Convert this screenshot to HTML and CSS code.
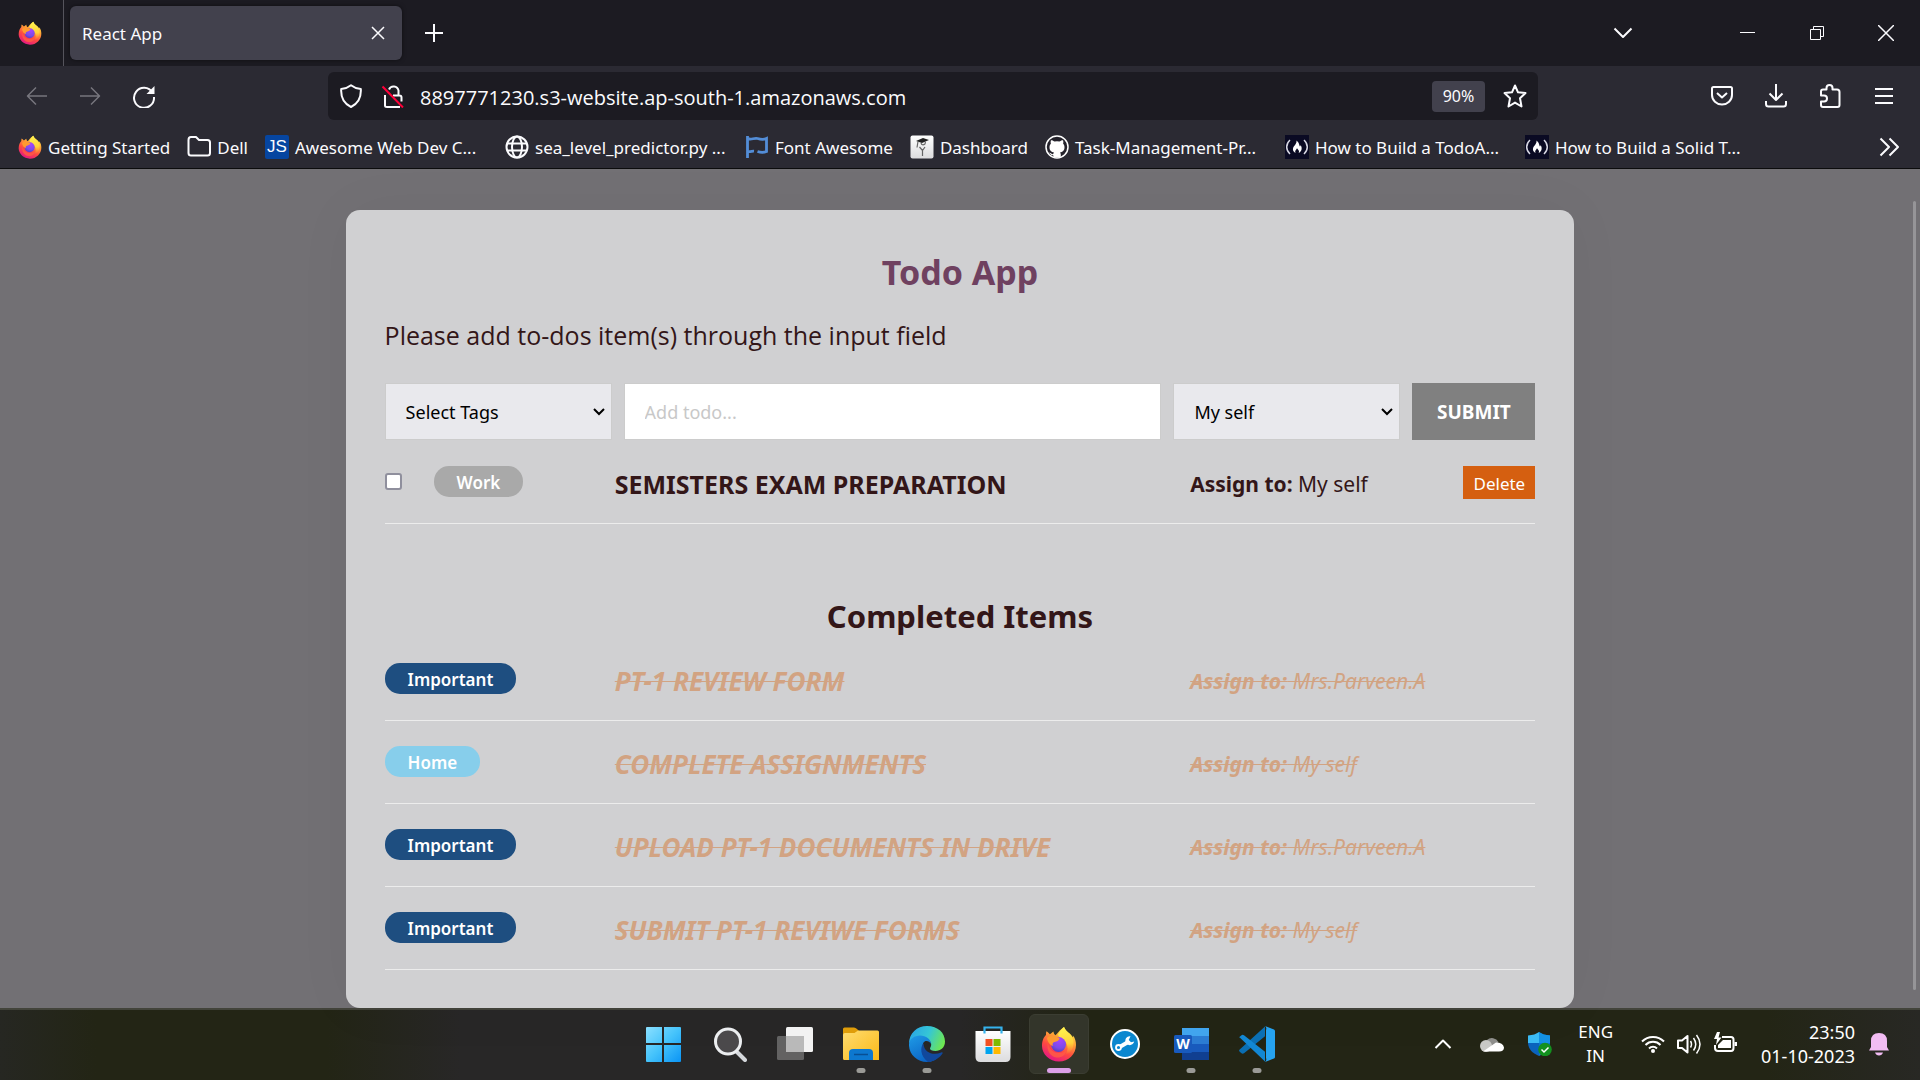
FILE: index.html
```html
<!DOCTYPE html>
<html lang="en">
<head>
<meta charset="utf-8">
<title>React App</title>
<link rel="stylesheet" href="styles.css">
</head>
<body>
<svg class="defs" aria-hidden="true">
  <defs>
    <linearGradient id="fxBody" x1="0.8" y1="0" x2="0.3" y2="1"><stop offset="0" stop-color="#fff44f"/><stop offset="0.35" stop-color="#ffa436"/><stop offset="0.65" stop-color="#ff4a40"/><stop offset="1" stop-color="#e31587"/></linearGradient>
    <linearGradient id="fxFlame" x1="0.5" y1="0" x2="0.6" y2="1"><stop offset="0" stop-color="#fff44f"/><stop offset="0.6" stop-color="#ffd23a"/><stop offset="1" stop-color="#ff9a2e" stop-opacity="0"/></linearGradient>
    <radialGradient id="fxGlobe" cx="0.6" cy="0.2" r="0.9"><stop offset="0" stop-color="#a643ff"/><stop offset="0.6" stop-color="#7a4be8"/><stop offset="1" stop-color="#4a3bb5"/></radialGradient>
    <linearGradient id="winG" x1="0" y1="0" x2="1" y2="1"><stop offset="0" stop-color="#8be0ff"/><stop offset="0.5" stop-color="#45c3fb"/><stop offset="1" stop-color="#0a94f5"/></linearGradient>
    <linearGradient id="folderG" x1="0" y1="0" x2="1" y2="1"><stop offset="0" stop-color="#ffdc70"/><stop offset="1" stop-color="#fbb917"/></linearGradient>
    <linearGradient id="edgeTop" x1="0" y1="0.3" x2="1" y2="0.6"><stop offset="0" stop-color="#2aa6e4"/><stop offset="0.5" stop-color="#35c6d6"/><stop offset="1" stop-color="#6fe84e"/></linearGradient>
    <linearGradient id="edgeLow" x1="0" y1="0" x2="0.6" y2="1"><stop offset="0" stop-color="#1f9be6"/><stop offset="1" stop-color="#0a62c4"/></linearGradient>
    <linearGradient id="paper" x1="0" y1="0" x2="0" y2="1"><stop offset="0" stop-color="#ffffff"/><stop offset="1" stop-color="#dcdcde"/></linearGradient>
    <symbol id="firefox" viewBox="0 0 36 36">
      <path fill="url(#fxBody)" d="M1 20C1 14 3 11 5 9c0-1.500 0-3 .5-3.800 1.500.8 2.500 2 3.300 3 1.800-.8 2.600-2.200 3.700-2.700.2 1.700.7 3 2 3.700 2-1.700 3.800-5 8.500-8.200 1 3 3.500 5 5.500 6.500 1.500 1.200 2.500 2.500 3 4 .3-.8.4-1.300.4-2C34.200 12 35 16 35 19c0 9-7.500 16.500-17 16.500S1 28 1 20z"/>
      <path fill="url(#fxFlame)" d="M17 8.500C18.500 6 20.500 3 23 1c1 3 3.500 5 5.500 6.500 3.500 3 5 8 3.500 13.500-1.500 5-5 7.500-8 8 3-4 3.500-9 .5-13C22 13 18 12 17 8.500z"/>
      <circle cx="17.500" cy="18.500" r="7.500" fill="url(#fxGlobe)"/>
      <path fill="#ff9a30" d="M6 12c2-2.500 5.500-3 9-1.500l3.500 1.500c0 2.500-2.500 3.500-5 4-1.800.5-2.500 2-1.500 4-3-1-5.500-4-6-8z"/>
      <path fill="#ff5a45" opacity=".85" d="M7 16c0 6 4.500 11 11 11 4 0 7-2 8.500-5-1.500 8-7 10-11 9.500C9 30.500 5 24 7 16z"/>
    </symbol>
    <symbol id="fcc" viewBox="0 0 24 24">
      <rect width="24" height="24" fill="#0a0a23"/>
      <path d="M5 5C.6 9 .6 15 5 19M19 5c4.400 4 4.400 10 0 14" fill="none" stroke="#d8d8e4" stroke-width="1.500"/>
      <path fill="#fff" d="M11.500 5.500c3 2.500 2.500 4.500 3.500 6 .5-.5.600-1 .6-1.500 1.600 2.500 1.800 6-1.900 8 1-2-.3-3-1.700-4.700-.9 1.700-2.600 2.900-1.400 4.700-3.200-1.500-3.200-4.500-1.600-6.700 1.500-2 2.800-3.300 2.500-5.800z"/>
    </symbol>
  </defs>
</svg>

<div class="browser">
  <header class="tabs">
    <div class="tabs__pin"><svg class="i24"><use href="#firefox"/></svg></div>
    <div class="tab">
      <span>React App</span>
      <button class="icon-btn" aria-label="Close tab"><svg width="14" height="14" viewBox="0 0 14 14"><path d="M1 1l12 12M13 1L1 13" class="line"/></svg></button>
    </div>
    <button class="icon-btn tabs__new" aria-label="New tab"><svg width="18" height="18" viewBox="0 0 18 18"><path d="M9 0v18M0 9h18" class="line thick"/></svg></button>
    <div class="winctl">
      <button class="icon-btn winctl__list" aria-label="List all tabs"><svg width="20" height="12" viewBox="0 0 20 12"><path d="M1.500 1.500L10 10l8.500-8.500" class="line thick"/></svg></button>
      <button class="icon-btn" aria-label="Minimize"><svg width="16" height="16"><path d="M0 7.500h15" class="line thin"/></svg></button>
      <button class="icon-btn" aria-label="Restore"><svg width="16" height="16"><path d="M1.500 4.500h10v10h-10zM4.500 4.500v-3h10v10h-3" class="line thin"/></svg></button>
      <button class="icon-btn" aria-label="Close"><svg width="16" height="16"><path d="M0 0l16 16M16 0L0 16" class="line"/></svg></button>
    </div>
  </header>

  <nav class="toolbar" aria-label="Navigation">
    <div class="toolbar__nav">
      <button class="icon-btn dim" aria-label="Back"><svg width="22" height="20" viewBox="0 0 22 20"><path d="M21 10H1.500M10 1.500L1.500 10l8.500 8.500" class="line"/></svg></button>
      <button class="icon-btn dim" aria-label="Forward"><svg width="22" height="20" viewBox="0 0 22 20"><path d="M1 10h19.500M12 1.500l8.500 8.500-8.500 8.500" class="line"/></svg></button>
      <button class="icon-btn" aria-label="Reload"><svg class="i24" viewBox="0 0 24 24"><path d="M20.500 8.500A10 10 0 1 0 22 13" class="line thick"/><path d="M22.500 2v8h-8z" fill="currentColor"/></svg></button>
    </div>
    <div class="urlbar">
      <button class="icon-btn" aria-label="Tracking protection"><svg class="i24" viewBox="0 0 24 24"><path d="M12 1.200c3 2.300 6.300 3.600 9.800 3.900C22.300 13.500 19 19.800 12 23 5 19.800 1.700 13.500 2.200 5.100 5.700 4.800 9 3.500 12 1.200z" class="line thick"/></svg></button>
      <button class="icon-btn" aria-label="Connection not secure"><svg class="i24" viewBox="0 0 24 24"><path d="M8 5.500a5 5 0 0 1 9.500 1V11M12 11.500h6.500q2 0 2 2v4M4 11v10.500Q4 23 6 23h13" class="line thick"/><path d="M1.500 2.500l20.500 21" stroke="#ff0039" stroke-width="2"/></svg></button>
      <input class="urlbar__input" type="text" aria-label="Address" value="8897771230.s3-website.ap-south-1.amazonaws.com">
      <button class="zoom-chip">90%</button>
      <button class="icon-btn" aria-label="Bookmark this page"><svg class="i24" viewBox="0 0 24 24"><path d="M12 1.500l3 6.800 7.500.8-5.500 5.200 1.500 8.200L12 18.600l-6.500 3.900L7 14.300 1.500 9.100 9 8.300z" class="line thick"/></svg></button>
    </div>
    <div class="toolbar__tools">
      <button class="icon-btn" aria-label="Save to Pocket"><svg class="i24" viewBox="0 0 24 24"><path d="M3.500 3h17q1.500 0 1.500 1.500V11a10 9.500 0 0 1-20 0V4.500Q2 3 3.500 3z" class="line thick"/><path d="M7 9l5 4.500L17 9" class="line thick"/></svg></button>
      <button class="icon-btn" aria-label="Downloads"><svg class="i24" viewBox="0 0 24 24"><path d="M12 0v15.500M5.500 9.500l6.500 6.500 6.500-6.500M2 17v3q0 2.500 2.500 2.500h15q2.500 0 2.500-2.500v-3" class="line thick"/></svg></button>
      <button class="icon-btn" aria-label="Extensions"><svg class="i24" viewBox="0 0 24 24"><path d="M3 7.500q0-2 2-2h3.500V4a3 3 0 0 1 6 0v1.500H19q2.500 0 2.500 2.500v13q0 2-2 2H5q-2 0-2-2v-3.500h3a3 3 0 0 0 0-6H3z" class="line thick"/></svg></button>
      <button class="icon-btn" aria-label="Menu"><svg class="i24" viewBox="0 0 24 24"><path d="M3 5h18M3 12h18M3 19h18" class="line thick"/></svg></button>
    </div>
  </nav>

  <nav class="bookmarks" aria-label="Bookmarks">
    <a href="#"><svg class="i24"><use href="#firefox"/></svg><span>Getting Started</span></a>
    <a href="#"><svg class="i24" viewBox="0 0 24 24"><path d="M1.500 5q0-3 2.500-3h5l3 3h8.500q2.500 0 2.500 2.500V18q0 2.500-2.500 2.500H4q-2.500 0-2.500-2.500z" class="line thick"/></svg><span>Dell</span></a>
    <a href="#" class="wide"><i class="js">JS</i><span>Awesome Web Dev C...</span></a>
    <a href="#" class="wide"><svg class="i24" viewBox="0 0 24 24"><g class="line thick"><circle cx="12" cy="12" r="10.500"/><ellipse cx="12" cy="12" rx="5" ry="10.500"/><path d="M2 8.500h20M2 15.500h20"/></g></svg><span>sea_level_predictor.py ...</span></a>
    <a href="#"><svg class="i24" viewBox="0 0 24 24"><path d="M2.500 1v22M3 3.500c3 2 6-1 9.500 0 4 1.300 6 1.500 9 0v13c-3.500 1.500-5.500 1.200-9 0" fill="none" stroke="#538dd7" stroke-width="2.800"/><path d="M3 16.500c2 .8 4-.5 6-.3" fill="none" stroke="#538dd7" stroke-width="2.800"/></svg><span>Font Awesome</span></a>
    <a href="#"><svg class="i24" viewBox="0 0 24 24"><rect x="0.500" y="0.500" width="23" height="23" rx="2" fill="url(#paper)"/><path d="M6 6l7-3 6 2-7 3z" fill="#222"/><path d="M8 6.500l-1 6M11 8q1 3 4 1l.5-2.500M9.500 12l3 3.500 2.500-3.500M12.500 15v6" fill="none" stroke="#666" stroke-width="1.200"/></svg><span>Dashboard</span></a>
    <a href="#" class="wide"><svg class="i24" viewBox="0 0 24 24"><circle cx="12" cy="12" r="11" fill="#24222b" stroke="#fff" stroke-width="1.500"/><path fill="#fff" d="M6 5.200c1.600 0 2.700.7 3.600 1.400a10 10 0 0 1 4.800 0C15.300 5.900 16.400 5.200 18 5.200c.5 1.300.4 2.400.1 3.200 1 1.200 1.400 2.300 1.400 3.800 0 3.500-2 4.800-4.500 5.200.7.800.8 1.500.8 2.500v2.600H8.300v-2.200C5.500 20.700 5.800 18.500 4 17.800c2-.5 2.500 1.700 4.300 1.300 0-.7.200-1.200.7-1.700-2.500-.4-4.500-1.700-4.500-5.200 0-1.500.4-2.600 1.400-3.800-.3-.8-.4-1.900.1-3.200z"/></svg><span>Task-Management-Pr...</span></a>
    <a href="#" class="wide"><svg class="i24"><use href="#fcc"/></svg><span>How to Build a TodoA...</span></a>
    <a href="#" class="wide"><svg class="i24"><use href="#fcc"/></svg><span>How to Build a Solid T...</span></a>
    <button class="icon-btn bookmarks__more" aria-label="More bookmarks"><svg width="20" height="20" viewBox="0 0 20 20"><path d="M1.500 1.500L10 10l-8.500 8.500M10.500 1.500L19 10l-8.500 8.500" class="line thick"/></svg></button>
  </nav>
</div>

<main class="page">
  <div class="scrollbar"></div>
  <section class="card">
    <h1>Todo App</h1>
    <p class="intro">Please add to-dos item(s) through the input field</p>
    <form class="form">
      <div class="select">
        <select aria-label="Tags"><option>Select Tags</option></select>
        <svg width="14" height="10" viewBox="0 0 14 10"><path d="M2 2l5 5 5-5"/></svg>
      </div>
      <input type="text" placeholder="Add todo..." aria-label="Todo">
      <div class="select">
        <select aria-label="Assign to"><option>My self</option></select>
        <svg width="14" height="10" viewBox="0 0 14 10"><path d="M2 2l5 5 5-5"/></svg>
      </div>
      <button type="button" class="submit">SUBMIT</button>
    </form>

    <ul class="list">
      <li class="item">
        <div class="item__tag"><input type="checkbox" id="t1"><label for="t1" class="tag tag--work">Work</label></div>
        <span class="item__title">SEMISTERS EXAM PREPARATION</span>
        <span class="item__who"><b>Assign to:</b> My self</span>
        <button type="button" class="delete">Delete</button>
      </li>
    </ul>

    <h2>Completed Items</h2>
    <ul class="list">
      <li class="item done"><div class="item__tag"><span class="tag tag--important">Important</span></div><span class="item__title">PT-1 REVIEW FORM</span><span class="item__who"><b>Assign to:</b> Mrs.Parveen.A</span></li>
      <li class="item done"><div class="item__tag"><span class="tag tag--home">Home</span></div><span class="item__title">COMPLETE ASSIGNMENTS</span><span class="item__who"><b>Assign to:</b> My self</span></li>
      <li class="item done"><div class="item__tag"><span class="tag tag--important">Important</span></div><span class="item__title">UPLOAD PT-1 DOCUMENTS IN DRIVE</span><span class="item__who"><b>Assign to:</b> Mrs.Parveen.A</span></li>
      <li class="item done"><div class="item__tag"><span class="tag tag--important">Important</span></div><span class="item__title">SUBMIT PT-1 REVIWE FORMS</span><span class="item__who"><b>Assign to:</b> My self</span></li>
    </ul>
  </section>
</main>

<footer class="taskbar">
  <div class="apps">
    <button class="app" aria-label="Start"><svg class="i36" viewBox="0 0 36 36"><path fill="url(#winG)" d="M2 1h15v16H1V2q0-1 1-1zM19 1h16q1 0 1 1v15H19zM1 19h16v17H2q-1 0-1-1zM19 19h17v16q0 1-1 1H19z"/></svg></button>
    <button class="app" aria-label="Search"><svg class="i36" viewBox="0 0 36 36"><path d="M26 26l8 8" stroke="#d5d8dc" stroke-width="4" stroke-linecap="round"/><circle cx="17" cy="15.500" r="12.500" fill="#4b494b" stroke="#eceef0" stroke-width="3"/></svg></button>
    <button class="app" aria-label="Task view"><svg class="i36" viewBox="0 0 36 36"><rect x="9" y="1" width="27" height="25" rx="1.500" fill="#f2f2f2"/><rect x="0" y="10" width="27" height="24" rx="1.500" fill="#777" opacity=".75"/><path d="M9 10h18v16H9z" fill="#b9b9b9"/></svg></button>
    <button class="app" aria-label="File Explorer"><svg class="i36" viewBox="0 0 36 36"><path d="M0 3q0-1.500 1.500-1.500H11q1.500 0 3 1.500l2 2v5H0z" fill="#e09d09"/><path d="M0 9q0-2 2-2h9.500L15 4.500h19.500Q36 4.500 36 6v28H1.500Q0 34 0 32.500z" fill="url(#folderG)"/><path d="M6 34V27q0-4 4-4h16q4 0 4 4v7z" fill="#0d78cf"/><path d="M11 28.500h14" stroke="#084f93" stroke-width="1.500"/></svg><i class="dot"></i></button>
    <button class="app" aria-label="Microsoft Edge"><svg class="i36" viewBox="0 0 36 36"><path d="M0 18C0 7 8 0 18 0c11 0 18 7 18 15.500 0 6-4.500 9.500-9.500 9.500-3.500 0-5.500-1.200-5.500-2.400 0-1 1.200-1.600 1.200-4.100 0-3-3-6.500-8.200-6.500C7 12 1.500 14 0 18z" fill="url(#edgeTop)"/><path d="M0 18c.5-5 5.500-8.500 11-8.500 6 0 11 4 11 8.500-1-2.500-3.500-3.500-5.500-3-5 1.500-3.500 12.500 5 16 3 1.200 6 .8 8.500-1C27 34 22.500 36 18 36 8 36-.5 28 0 18z" fill="url(#edgeLow)"/><path d="M14.500 17.500C11 21 11 30 19 35.900c6.500-.2 12-4.400 14.500-8.400.5-1-.5-1.400-1.300-1-8 3.500-17.500 0-17.700-9z" fill="#11489c"/></svg><i class="dot"></i></button>
    <button class="app" aria-label="Microsoft Store"><svg class="i36" viewBox="0 0 36 36"><path d="M0.500 5h35v26q0 5-5 5h-25q-5 0-5-5z" fill="url(#paper)"/><path d="M9.500 7.500V1.500h17v6" fill="none" stroke="#35b2ec" stroke-width="2.200"/><path d="M10.500 13h7v7h-7z" fill="#f25022"/><path d="M18.500 13h7v7h-7z" fill="#7fba00"/><path d="M10.500 21h7v7h-7z" fill="#00a4ef"/><path d="M18.500 21h7v7h-7z" fill="#ffb900"/></svg></button>
    <button class="app app--active" aria-label="Firefox"><svg class="i36"><use href="#firefox"/></svg><i class="dot dot--on"></i></button>
    <button class="app" aria-label="Support tool"><svg class="i36" viewBox="0 0 36 36"><circle cx="18" cy="18" r="14" fill="#0b87cf" stroke="#fff" stroke-width="2"/><path d="M13.500 20.500l8.500-5" stroke="#fff" stroke-width="4"/><circle cx="11.500" cy="21.500" r="2.500" fill="#0b87cf" stroke="#fff" stroke-width="1.800"/><path d="M23.500 10.200a4.500 4.500 0 1 0 3.700 5.300l-3.200.8-2.300-2.300z" fill="#fff"/></svg></button>
    <button class="app" aria-label="Word"><svg class="i36" viewBox="0 0 36 36"><path d="M9 2h27v8H9z" fill="#41a5ee"/><path d="M9 10h27v8H9z" fill="#2b7cd3"/><path d="M9 18h27v8H9z" fill="#185abd"/><path d="M9 26h27v8H9z" fill="#103f91"/><rect x="1" y="9" width="18" height="18" rx="1.500" fill="#185abd"/><text x="10" y="23" class="word">W</text></svg><i class="dot"></i></button>
    <button class="app" aria-label="Visual Studio Code"><svg class="i36" viewBox="0 0 36 36"><path d="M.7 23.500L26 .5v9.800L5 27.300q-1.500 1-2.800-.2L.7 25.700q-1.200-1.100 0-2.200z" fill="#0b6fb3"/><path d="M.7 11.500L26 35.500v-9.800L5 9.200q-1.500-1-2.800.2L.7 10.800q-1 .5 0 .7z" fill="#1287d3"/><path d="M26 0l9 3.500q1 .5 1 1.500v26q0 1-1 1.500L26 36q2-1.500 1-4V4q1-2.500-1-4z" fill="#26a3f0"/></svg><i class="dot"></i></button>
  </div>
  <div class="tray">
    <button class="icon-btn tray__up" aria-label="Show hidden icons"><svg width="18" height="12" viewBox="0 0 18 12"><path d="M1.500 10L9 2.500l7.500 7.500" class="line thick"/></svg></button>
    <svg class="i24 tray__cloud" viewBox="0 0 24 24"><path d="M7 8a7.500 7.500 0 0 1 11.500 2l-6 6H5z" fill="#8f8f8c"/><circle cx="6" cy="14" r="6" fill="#c9c9c6"/><path d="M3 19.500L16 10.500q7 0 8 5 0 4-5 4H6q-2 0-3-.5z" fill="#fff"/></svg>
    <svg class="i24 tray__shield" viewBox="0 0 24 24"><path d="M11 0q4 3 11 3.500V11c0 6-4 10-11 13z" fill="#0b78d0"/><path d="M11 0Q7 3 0 3.500V11h11z" fill="#3cbcf5"/><path d="M0 11c.5 6 4 10 11 13V11z" fill="#0a63bd"/><path d="M11 0q4 3 11 3.500V11H11z" fill="#1592e4"/><circle cx="17" cy="17.500" r="6.800" fill="#13911f"/><path d="M13.500 17.500l2.500 2.500 4.500-4.500" fill="none" stroke="#fff" stroke-width="1.500"/></svg>
    <span class="tray__lang">ENG<br>IN</span>
    <svg class="i24" viewBox="0 0 24 24"><path d="M1 9.500a15.500 15.500 0 0 1 22 0M4.500 13a10.500 10.500 0 0 1 15 0M8 16.500a5.700 5.700 0 0 1 8 0" class="line thick"/><circle cx="12" cy="19" r="2" fill="#fff"/></svg>
    <svg class="i24" viewBox="0 0 24 24"><path d="M1 8.500h4L10.500 4v16.500L5 16H1z" class="line thick"/><path d="M13.500 9q2 3.300 0 6.500M16.500 6q4.500 6.200 0 12.500M19.500 3q7 9.200 0 18.500" class="line"/></svg>
    <svg class="i24" viewBox="0 0 24 24"><path d="M9 5h9q2.500 0 2.500 2.500v8.500q0 3-2.500 3H5q-3 0-3-3v-3" class="line thick"/><path d="M10 8h8v8H5v-3z" fill="#fff"/><path d="M21.500 10H24v4h-2.500z" fill="#fff"/><path d="M4 0L1 7h3l-1 6 5.500-7.500H5.500L7 0z" fill="#fff"/></svg>
    <time class="tray__clock">23:50<br>01-10-2023</time>
    <svg class="i24 tray__bell" viewBox="0 0 24 24"><path d="M12 1q8 0 8 8v6l2 3.500H2L4 15V9q0-8 8-8zM8 20.500h8q-1 3-4 3t-4-3z" fill="#f2bcf3"/></svg>
  </div>
</footer>
</body>
</html>
```
FILE: styles.css
```css
* { box-sizing: border-box; }
html, body { margin: 0; }
body {
  min-height: 100vh;
  display: flex;
  flex-direction: column;
  background: #727074;
  font-family: "Noto Sans", "Open Sans", sans-serif;
  color: #331618;
}
button, input, select { font: inherit; }
svg { display: block; flex: none; }
.defs { position: absolute; width: 0; height: 0; }
.i24 { width: 24px; height: 24px; }
.i36 { width: 36px; height: 36px; }
.line { fill: none; stroke: currentColor; stroke-width: 1.5; stroke-linejoin: round; }
.thick { stroke-width: 2; }
.thin { stroke-width: 1; }
.icon-btn {
  display: flex;
  align-items: center;
  justify-content: center;
  flex: none;
  padding: 0;
  border: 0;
  background: none;
  color: inherit;
}
.dim { color: #77767e; }

/* browser chrome */
.browser {
  background: #2b2a33;
  border-bottom: 1px solid #0c0c0d;
  color: #fbfbfe;
  font-size: 17px;
}
.tabs {
  display: flex;
  align-items: center;
  height: 66px;
  background: #1c1b22;
}
.tabs__pin {
  display: flex;
  align-items: center;
  align-self: stretch;
  width: 64px;
  padding-left: 18px;
  border-right: 1px solid #55545c;
}
.tab {
  display: flex;
  align-items: center;
  justify-content: space-between;
  width: 332px;
  height: 54px;
  margin-left: 6px;
  padding: 0 17px 0 12px;
  border-radius: 6px;
  background: #42414d;
  box-shadow: 0 0 4px rgba(0, 0, 0, .5);
}
.tabs__new { margin-left: 23px; }
.winctl { display: flex; margin-left: auto; }
.winctl .icon-btn { width: 69px; height: 66px; }
.winctl .winctl__list { width: 56px; margin-right: 62px; }

.toolbar {
  display: flex;
  align-items: center;
  height: 60px;
}
.toolbar__nav {
  display: flex;
  gap: 31px;
  width: 328px;
  padding-left: 26px;
}
.urlbar {
  display: flex;
  align-items: center;
  gap: 18px;
  flex: 1;
  height: 48px;
  padding: 0 11px;
  border-radius: 6px;
  background: #1c1b22;
}
.urlbar__input {
  flex: 1;
  min-width: 0;
  margin-left: -3px;
  padding: 2px 0 0;
  border: 0;
  outline: 0;
  background: none;
  color: #fbfbfe;
  font-family: "Open Sans", sans-serif;
  font-size: 20px;
}
.zoom-chip {
  width: 53px;
  height: 31px;
  padding: 0;
  border: 0;
  border-radius: 4px;
  background: #42414d;
  color: #fbfbfe;
  font-size: 16px;
}
.toolbar__tools {
  display: flex;
  justify-content: flex-end;
  gap: 30px;
  width: 382px;
  padding-right: 24px;
}
.bookmarks {
  display: flex;
  align-items: center;
  gap: 17px;
  height: 42px;
  padding: 0 21px 0 18px;
}
.bookmarks a {
  display: flex;
  align-items: center;
  gap: 6px;
  color: inherit;
  text-decoration: none;
  white-space: nowrap;
}
.bookmarks .wide { width: 223px; }
.bookmarks__more { margin-left: auto; }
.js {
  width: 24px;
  height: 24px;
  border-radius: 2px;
  background: #0645a0;
  font: 17px/24px "Liberation Sans", sans-serif;
  text-align: center;
}

/* todo page */
.page {
  position: relative;
  flex: 1;
  padding-top: 41px;
}
.scrollbar {
  position: absolute;
  top: 32px;
  right: 4px;
  bottom: 18px;
  width: 3px;
  border-radius: 2px;
  background: #969598;
}
.card {
  width: 64%;
  margin: 0 auto;
  padding: 40px 39px 38px;
  border-radius: 14px;
  background: #d0d0d2;
  box-shadow: 0 0 60px rgba(0, 0, 0, .04);
}
h1, h2 {
  margin: 0;
  line-height: 44px;
  text-align: center;
}
h1 { color: #6f4160; font-size: 34px; }
h2 { margin-top: 70px; font-size: 31px; }
.intro {
  margin: 23px 0 30px;
  font-family: "Open Sans", sans-serif;
  font-size: 25px;
  line-height: 36px;
}
.form {
  display: grid;
  grid-template-columns: 227px 1fr 227px 123px;
  gap: 12px;
  height: 57px;
  margin-bottom: 1px;
  font-size: 18px;
}
.select { position: relative; }
.select svg {
  position: absolute;
  right: 6px;
  top: 24px;
  fill: none;
  stroke: #000;
  stroke-width: 2;
  pointer-events: none;
}
.form select, .form input {
  width: 100%;
  height: 100%;
  padding: 0 20px;
  border: 1px solid #ccc;
  border-radius: 0;
  outline: 0;
  appearance: none;
  background: #e9e9ed;
  color: #000;
}
.form input { background: #fff; }
.form input::placeholder { color: #c8c8c8; }
.submit {
  padding: 0;
  border: 0;
  background: #808080;
  color: #fff;
  font-size: 19px;
  font-weight: 700;
}
.list { margin: 0; padding: 0; list-style: none; }
.item {
  display: grid;
  grid-template-columns: 20% 50% 20% 10%;
  align-items: start;
  padding: 25px 0 21px;
  border-bottom: 1px solid #ececec;
  line-height: 36px;
}
.item__tag { display: flex; align-items: center; }
.item__tag input {
  width: 17px;
  height: 17px;
  margin: 0 32px 0 0;
  border: 2px solid #8f8f9d;
  border-radius: 3px;
  appearance: none;
  background: #fff;
}
.tag {
  padding: 2px 23px 0;
  border-radius: 15px;
  color: #fff;
  font-size: 17px;
  font-weight: 600;
  line-height: 29px;
}
.tag--work { background: #a9a9a9; }
.tag--important { background: #1e4e80; }
.tag--home { background: #87ceeb; }
.item__title { font-size: 25px; font-weight: 700; }
.item__who { font-size: 21px; white-space: nowrap; }
.done .item__title, .done .item__who {
  color: #d2a382;
  font-style: italic;
  text-decoration: line-through 1px;
}
.done .item__title { font-size: 26px; }
.delete {
  justify-self: end;
  width: 72px;
  height: 33px;
  padding: 0;
  border: 0;
  background: #d55f10;
  color: #fff;
  font-size: 17px;
}

/* desktop taskbar */
.taskbar {
  display: grid;
  grid-template-columns: 1fr auto 1fr;
  height: 72px;
  padding-bottom: 2px;
  border-top: 2px solid #43443b;
  background: linear-gradient(90deg, #262722 0%, #232515 5%, #232515 17%, #282727 24%, #282727 50%, #232515 56%, #232515 92%, #282824 100%);
  color: #fff;
  font-size: 17px;
}
.apps {
  display: flex;
  grid-column: 2;
  gap: 6px;
  align-items: center;
}
.app {
  position: relative;
  display: flex;
  align-items: center;
  justify-content: center;
  width: 60px;
  height: 60px;
  padding: 0;
  border: 1px solid transparent;
  border-radius: 6px;
  background: none;
}
.app--active { background: #33352a; border-color: #3b3d32; }
.dot {
  position: absolute;
  bottom: 0;
  left: 50%;
  width: 9px;
  height: 5px;
  border-radius: 3px;
  background: #9a9a96;
  transform: translateX(-50%);
}
.dot--on { width: 24px; background: #dca0e8; }
.word {
  fill: #fff;
  font-size: 14px;
  font-weight: 700;
  text-anchor: middle;
}
.tray {
  display: flex;
  align-items: center;
  justify-content: flex-end;
  gap: 12px;
  padding-right: 29px;
  line-height: 24px;
}
.tray__up { margin-right: 16px; }
.tray__shield { margin: 0 14px 0 12px; }
.tray__lang { margin-right: 16px; text-align: center; }
.tray__clock { margin-left: 12px; font-size: 18px; text-align: right; }
```
